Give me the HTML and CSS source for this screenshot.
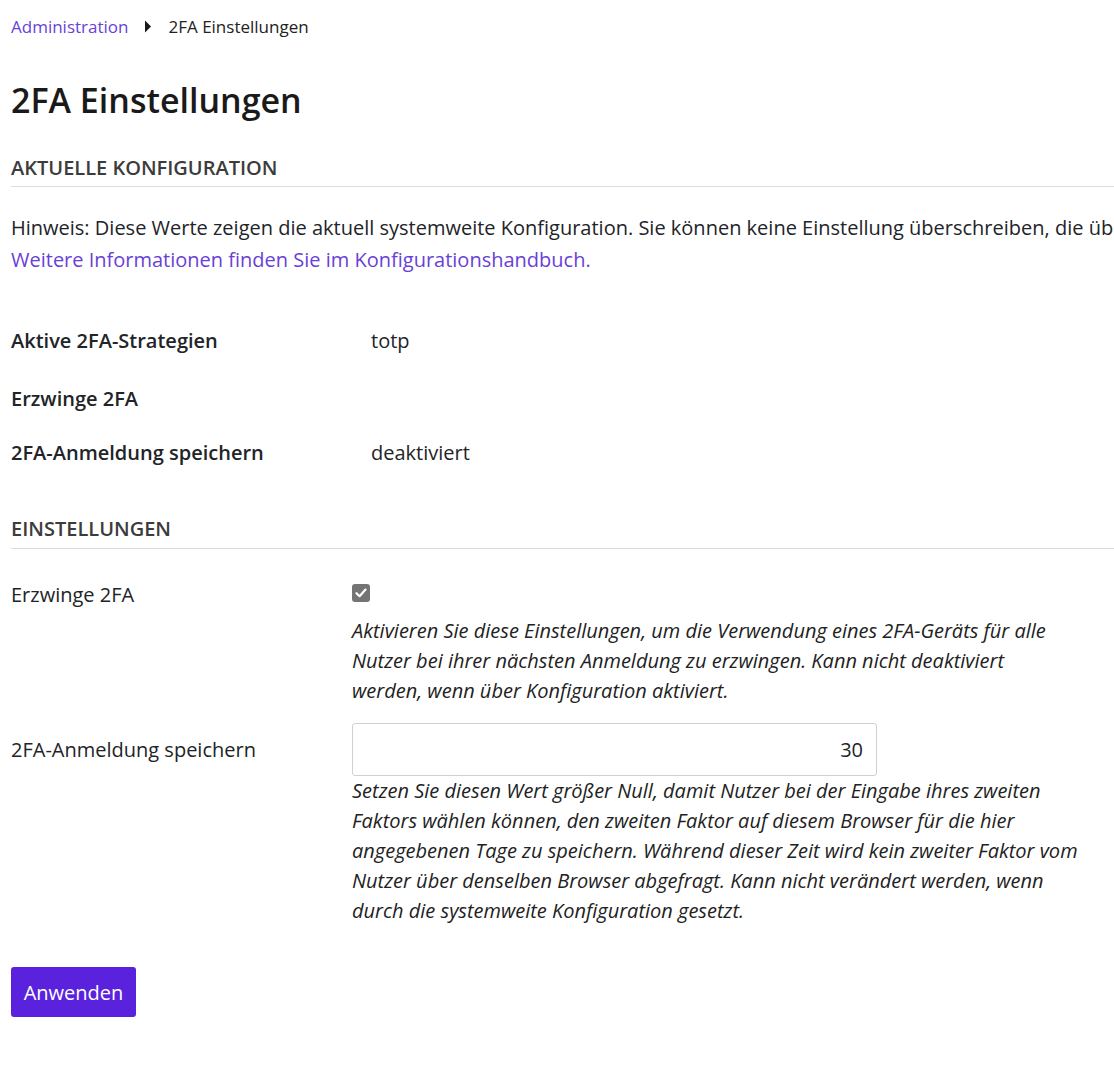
FILE: index.html
```html
<!DOCTYPE html>
<html lang="de">
<head>
<meta charset="utf-8">
<title>2FA Einstellungen</title>
<link rel="stylesheet" href="styles.css">
</head>
<body>
<div class="page">
  <nav class="breadcrumb">
    <a href="#" class="crumb-link">Administration</a>
    <svg class="crumb-sep" width="8" height="13" viewBox="0 0 8 13"><path d="M1 0.5 L7 6.5 L1 12.5 Z" fill="#1a1a1a"/></svg>
    <span class="crumb-current">2FA Einstellungen</span>
  </nav>

  <h1 class="title">2FA Einstellungen</h1>

  <h2 class="section-title">Aktuelle Konfiguration</h2>
  <p class="notice">Hinweis: Diese Werte zeigen die aktuell systemweite Konfiguration. Sie können keine Einstellung überschreiben, die über die Konfiguration gesetzt wurde.<br><a href="#" class="link">Weitere Informationen finden Sie im Konfigurationshandbuch.</a></p>

  <dl class="config">
    <div class="config-row"><dt>Aktive 2FA-Strategien</dt><dd>totp</dd></div>
    <div class="config-row"><dt>Erzwinge 2FA</dt><dd></dd></div>
    <div class="config-row"><dt>2FA-Anmeldung speichern</dt><dd>deaktiviert</dd></div>
  </dl>

  <h2 class="section-title second">Einstellungen</h2>

  <div class="form">
    <div class="form-row">
      <label class="form-label">Erzwinge 2FA</label>
      <div class="form-field">
        <span class="checkbox">
          <svg width="12" height="10" viewBox="0 0 12 10"><path d="M1.5 5.2 L4.6 8.2 L10.5 1.6" fill="none" stroke="#fff" stroke-width="2.2" stroke-linecap="round" stroke-linejoin="round"/></svg>
        </span>
        <p class="help help-check">Aktivieren Sie diese Einstellungen, um die Verwendung eines 2FA-Geräts für alle Nutzer bei ihrer nächsten Anmeldung zu erzwingen. Kann nicht deaktiviert werden, wenn über Konfiguration aktiviert.</p>
      </div>
    </div>
    <div class="form-row">
      <label class="form-label label-input">2FA-Anmeldung speichern</label>
      <div class="form-field">
        <input class="number-input" type="text" value="30">
        <p class="help help-input">Setzen Sie diesen Wert größer Null, damit Nutzer bei der Eingabe ihres zweiten Faktors wählen können, den zweiten Faktor auf diesem Browser für die hier angegebenen Tage zu speichern. Während dieser Zeit wird kein zweiter Faktor vom Nutzer über denselben Browser abgefragt. Kann nicht verändert werden, wenn durch die systemweite Konfiguration gesetzt.</p>
      </div>
    </div>
  </div>

  <button class="btn-primary" type="button">Anwenden</button>
</div>
</body>
</html>
```

FILE: styles.css
```css
html, body {
  margin: 0;
  padding: 0;
  overflow: hidden;
  background: #fff;
}
body {
  font-family: "Open Sans", "Noto Sans", sans-serif;
  color: #222428;
  font-size: 20px;
}
.page {
  padding: 12px 0 0 11px;
}
.breadcrumb {
  display: flex;
  align-items: center;
  height: 28px;
  font-size: 17px;
}
.crumb-link {
  color: #6a3fd6;
  text-decoration: none;
}
.crumb-sep {
  margin: 0 16px;
}
.crumb-current {
  color: #222;
}
.title {
  font-size: 34px;
  font-weight: 600;
  margin: 0;
  padding-top: 40px;
  line-height: 40px;
  color: #1a1a1a;
}
.section-title {
  text-transform: uppercase;
  font-size: 20px;
  font-weight: 600;
  color: #3c3c3c;
  margin: 0;
  margin-top: 36px;
  padding-bottom: 6px;
  line-height: 24px;
  border-bottom: 1px solid #dcdcdc;
}
.section-title.second {
  margin-top: 52px;
  padding-bottom: 7px;
}
.notice {
  margin: 25px 0 0;
  line-height: 32px;
  white-space: nowrap;
  overflow: hidden;
}
.link {
  color: #6a3fd6;
  text-decoration: none;
}
.config {
  margin: 53px 0 0;
}
.config-row {
  display: flex;
  line-height: 24px;
  margin-bottom: 30px;
}
.config-row:first-child {
  margin-bottom: 34px;
}
.config-row dt {
  width: 360px;
  font-weight: 600;
}
.config-row dd {
  margin: 0;
}
.form {
  margin-top: 31px;
}
.form-row {
  display: flex;
}
.form-row + .form-row {
  margin-top: 17px;
}
.form-label {
  width: 341px;
  flex: none;
  line-height: 24px;
  padding-top: 3px;
}
.form-label.label-input {
  padding-top: 15px;
}
.form-field {
  flex: none;
  width: 762px;
}
.checkbox {
  display: flex;
  align-items: center;
  justify-content: center;
  width: 18px;
  height: 18px;
  border-radius: 3px;
  background: #747474;
  margin-top: 4px;
}
.help {
  font-style: italic;
  margin: 14px 0 0;
  line-height: 30px;
  width: 735px;
  color: #222;
}
.help-check {
  width: 700px;
}
.help-input {
  margin-top: 0;
  margin-bottom: 0;
}
.number-input {
  display: block;
  box-sizing: border-box;
  width: 525px;
  height: 53px;
  border: 1px solid #d0d0d0;
  border-radius: 3px;
  text-align: right;
  font-family: inherit;
  font-size: 20px;
  color: #222428;
  padding: 0 13px;
}
.btn-primary {
  display: block;
  margin-top: 41px;
  background: #5b22de;
  color: #fff;
  border: none;
  border-radius: 3px;
  font-family: inherit;
  font-size: 20px;
  height: 50px;
  width: 125px;
  padding: 0;
}
```
